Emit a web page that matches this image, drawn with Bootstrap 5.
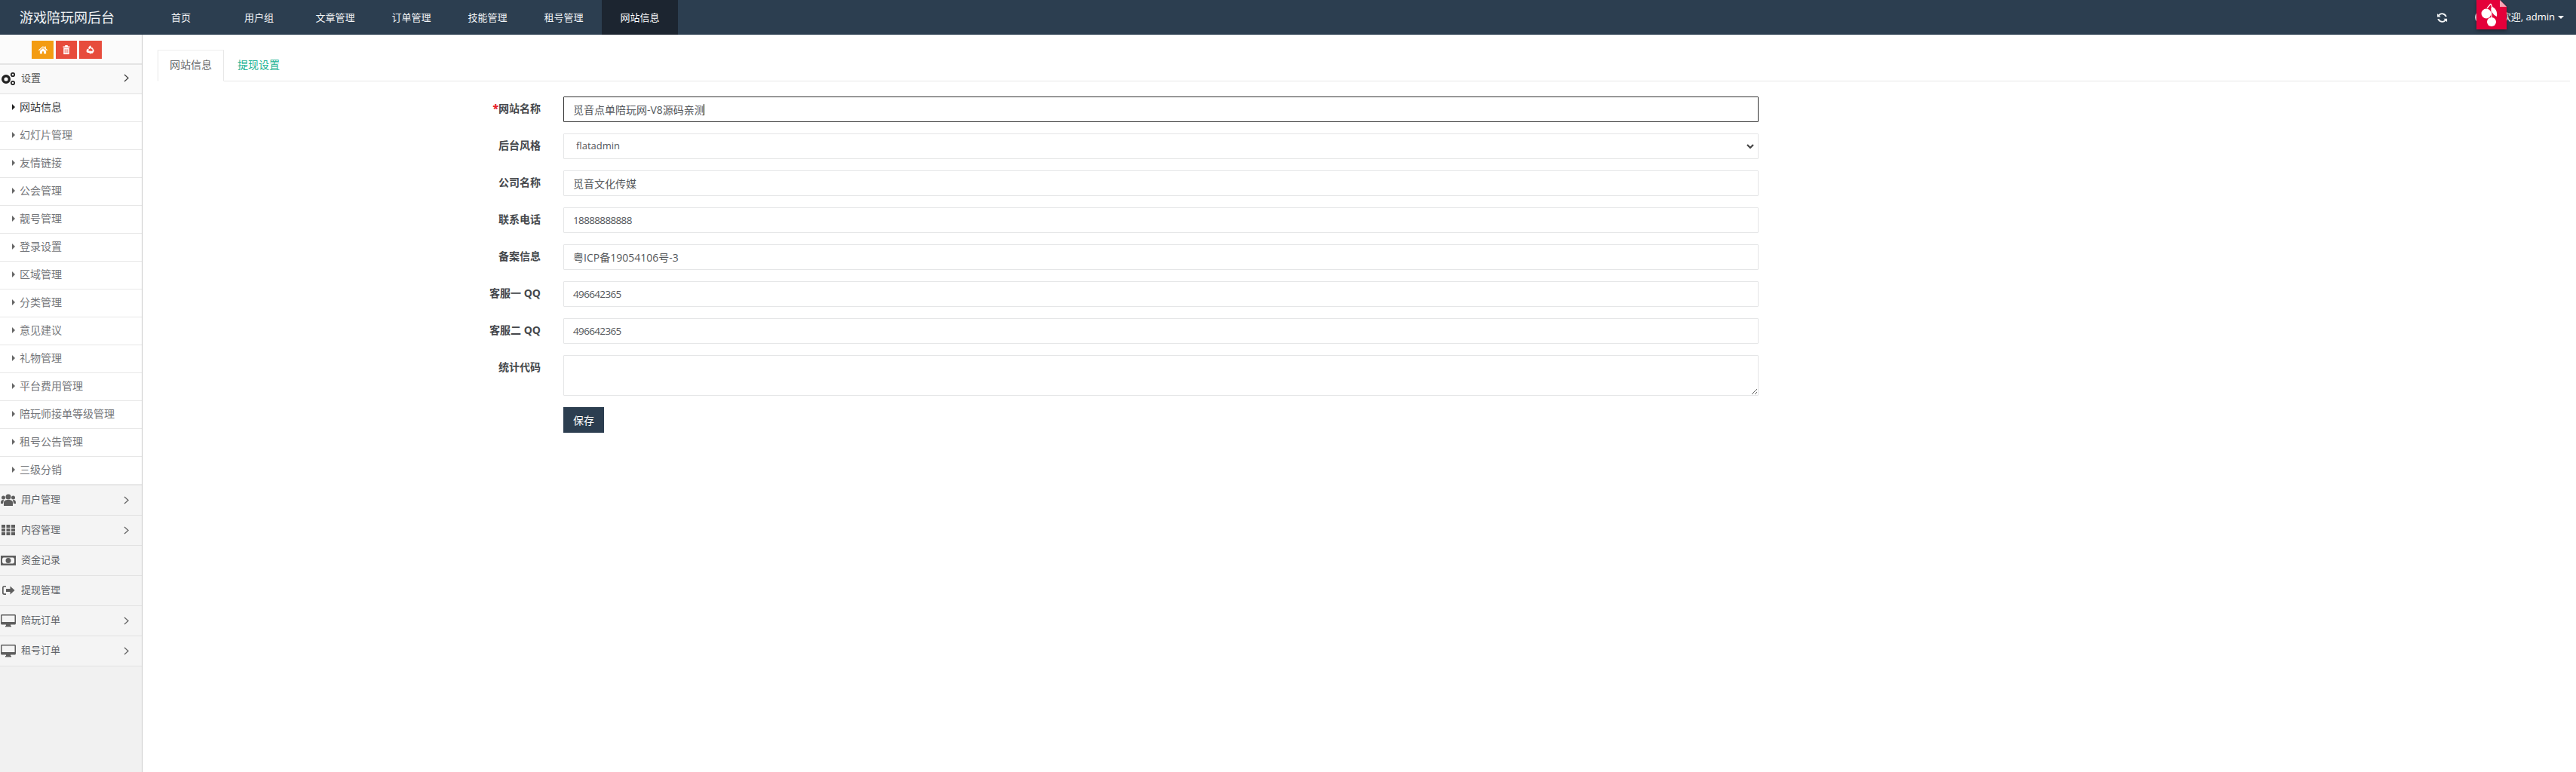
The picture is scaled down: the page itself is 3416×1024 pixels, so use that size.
<!DOCTYPE html>
<html lang="zh-CN">
<head>
    <meta charset="UTF-8">
    <meta name="viewport" content="width=device-width, initial-scale=1.0">
    <title>游戏陪玩网后台</title>
    <link href="https://cdn.jsdelivr.net/npm/bootstrap@5.3.0/dist/css/bootstrap.min.css" rel="stylesheet">
    <style>
        html, body { height: 100%; overflow: hidden; }
        body {
            font-family: "Open Sans", "Noto Sans CJK SC", sans-serif;
            font-size: 14px;
            color: #676a6c;
            background: #fff;
        }
        .top-bar { height: 46px; background: #2c3e50; padding: 0; flex-wrap: nowrap; }
        .top-brand { width: 187px; padding-left: 26px; color: #f0f3f5; font-size: 18px; line-height: 46px; flex: none; }
        .top-bar .nav-link {
            width: 101px; height: 46px; padding: 0; line-height: 46px; text-align: center;
            color: #f2f4f6; font-size: 13px;
        }
        .top-bar .nav-item:first-child .nav-link { width: 106px; }
        .top-bar .nav-link.active { background: #1c2530; color: #fff; }
        .top-right { margin-left: auto; color: #fff; font-size: 13px; padding-right: 16px; height: 46px; }
        .refresh-ico { width: 15px; height: 15px; fill: #f4f6f7; margin-right: 71px; }
        .circle-peek { position: absolute; left: 3282px; top: 15px; width: 16px; height: 16px; border-radius: 50%; background: #dfe3e7; }
        .logo-flag { position: absolute; left: 3284px; top: 0; width: 40px; height: 39px; filter: drop-shadow(0 2px 2px rgba(0,0,0,.35)); }
        .caret-down { display: inline-block; margin-left: 4px; border-left: 4px solid transparent; border-right: 4px solid transparent; border-top: 4px solid #fff; vertical-align: 2px; }

        .page-body { height: calc(100vh - 46px); }
        .side-col { width: 189px; flex: none; background: #f1f1f1; border-right: 1px solid #c8c8c8; }
        .quick-row { height: 40px; padding: 8px 0 0 42px; gap: 3px; background: #fbfbfb; border-bottom: 2px solid #e4e4e4; }
        .quick-btn { height: 24px; display: flex; align-items: center; justify-content: center; }
        .quick-btn svg { width: 12px; height: 12px; fill: #fff; }
        .q-orange { width: 29px; background: #f39c12; }
        .q-red { width: 28px; background: #e74c3c; }
        .q-red2 { width: 30px; background: #e74c3c; }
        .menu-head {
            height: 40px; display: flex; align-items: center; font-size: 13px; color: #62656a;
            border-bottom: 1px solid #e2e2e2; background: #f4f4f4; padding-bottom: 1px;
        }
        .menu-head .mi { width: 20px; height: 18px; margin: 0 7px 0 1px; fill: #5e5e5e; flex: none; }
        .menu-head .chev { width: 7px; height: 11px; margin-left: auto; margin-right: 17px; fill: none; stroke: #666; stroke-width: 1.3; }
        .menu-head.open { height: 39px; background: #f9f9f9; color: #555; padding-bottom: 3px; }
        .menu-head.open .chev { stroke: #444; }
        .gear-ring { fill: none; stroke: #222; }
        .sub-wrap { background: #fff; border-bottom: 2px solid #e7e7e7; }
        .sub-item {
            height: 37px; display: flex; align-items: center; color: #74767a; font-size: 14px;
            border-bottom: 1px solid #e7e7e7; padding-left: 16px; padding-bottom: 3px;
        }
        .sub-item:last-child { border-bottom: 0; height: 36px; }
        .sub-item::before {
            content: ""; width: 0; height: 0; margin-right: 6px;
            border-top: 4px solid transparent; border-bottom: 4px solid transparent; border-left: 4px solid #666;
        }
        .sub-item.on { color: #3a3c40; }
        .sub-item.on::before { border-left-color: #222; }

        .main-col { padding: 20px 8px 0 20px; background: #fff; min-width: 0; }
        .tab-bar.nav-tabs { border-bottom: 1px solid #e7e7e7; height: 42px; }
        .tab-bar .nav-link {
            height: 42px; padding: 0 15px; line-height: 38px; border-radius: 0; color: #1ab394; font-size: 14px;
            border-color: transparent; margin-bottom: -1px; margin-right: 2px;
        }
        .tab-bar .nav-link.active { color: #676a6c; border-color: #eee #e7e7e7 #fff; }
        .form-wrap { padding-top: 20px; }
        .field-row { display: flex; margin-bottom: 15px; }
        .field-label {
            width: 508px; padding-top: 5px; margin: 0; text-align: right; font-weight: 700; color: #44474b; font-size: 14px;
            flex: none;
        }
        .field-label b { color: #e8242c; }
        .field-box { width: 1585px; margin-left: 30px; position: relative; flex: none; }
        .field-box .form-control, .field-box .form-select {
            height: 34px; border: 1px solid #e5e6e7; border-radius: 1px; padding: 0 12px; font-size: 14px; color: #55585c;
            font-family: inherit; box-shadow: none;
        }
        .field-box .form-select {
            padding-left: 16px; font-size: 13px;
            background-image: url("data:image/svg+xml,%3csvg xmlns='http://www.w3.org/2000/svg' viewBox='0 0 10 7'%3e%3cpath fill='none' stroke='%23444' stroke-width='2.2' d='M1 1l4 4 4-4'/%3e%3c/svg%3e");
            background-size: 10px 7px; background-position: right 5px center;
        }
        .field-box textarea.form-control { height: 54px; padding-top: 6px; }
        .field-box .form-control.focused { border-color: #333; }
        .field-box .form-control.num-val { font-size: 13.5px; letter-spacing: -.65px; }
        .fake-caret { position: absolute; left: 186px; top: 10px; width: 1px; height: 15px; background: #222; }
        .save-btn.btn {
            width: 54px; height: 34px; padding: 0; border-radius: 0; background: #2c3e50; border-color: #2c3e50; color: #fff; font-size: 14px;
        }
    </style>
</head>
<body>
    <nav class="navbar navbar-expand top-bar">
        <div class="top-brand">游戏陪玩网后台</div>
        <ul class="navbar-nav">
            <li class="nav-item"><a class="nav-link" href="#">首页</a></li>
            <li class="nav-item"><a class="nav-link" href="#">用户组</a></li>
            <li class="nav-item"><a class="nav-link" href="#">文章管理</a></li>
            <li class="nav-item"><a class="nav-link" href="#">订单管理</a></li>
            <li class="nav-item"><a class="nav-link" href="#">技能管理</a></li>
            <li class="nav-item"><a class="nav-link" href="#">租号管理</a></li>
            <li class="nav-item"><a class="nav-link active" href="#">网站信息</a></li>
        </ul>
        <div class="top-right d-flex align-items-center">
            <svg class="refresh-ico" viewBox="0 0 16 16"><path d="M14.6 6.4h-2.3a4.6 4.6 0 0 0-8-1.3l1.7 1.7H1V2l1.7 1.7a7 7 0 0 1 11.9 2.7zM1.4 9.6h2.3a4.6 4.6 0 0 0 8 1.3L10 9.2h5V14l-1.7-1.700A7 7 0 0 1 1.400 9.600z"/></svg>
            <span>欢迎, admin<i class="caret-down"></i></span>
        </div>
        <span class="circle-peek"></span>
        <svg class="logo-flag" viewBox="0 0 40 39">
            <path d="M0 0H31L40 9V39H0z" fill="#e4003a"/>
            <path d="M31 0L40 9H31z" fill="#f7a5b5"/>
            <circle cx="13" cy="18" r="6.500" fill="#fff"/>
            <circle cx="20" cy="29" r="6" fill="#fff"/>
            <path d="M20 9c5 1 8 6 7 13-5-2-8-7-7-13z" fill="#fff"/>
            <path d="M19 5L14 11M19 5l2 5M20 10l0 14" stroke="#fff" stroke-width="1.200" fill="none"/>
        </svg>
    </nav>

    <div class="d-flex page-body">
        <aside class="side-col">
            <div class="d-flex quick-row">
                <a class="quick-btn q-orange" href="#"><svg viewBox="0 0 16 16"><path d="M8 1.500L0 8.300l1 1.200L8 3.700l7 5.800 1-1.200-3-2.500V2h-2v2.500zM2.500 9.800V15h4v-4h3v4h4V9.800L8 5.200z"/></svg></a>
                <a class="quick-btn q-red" href="#"><svg viewBox="0 0 16 16"><path fill-rule="evenodd" d="M6 0h4l1 2h3v2H2V2h3zM3 5h10v11H3zm2 2v7h1V7zm2.500 0v7h1V7zM10 7v7h1V7z"/></svg></a>
                <a class="quick-btn q-red2" href="#"><svg viewBox="0 0 16 16"><path d="M8 .5l2.600 4.400-1.800 1L8 4.600 6.600 7 3.800 5.400 5.400 2.600C6 1.400 6.800.5 8 .5zM11.400 4l2.500 4.300c.7 1.200.5 2.300-.2 3.200L11 10l1-2-2.800-1.600zM1 9l1.700-3 2.700 1.600L4 10h2.500v3.200H3.600C1.200 13.200.3 11 1 9zM8 10.400h3.800c1.400 0 2.100-.5 2.400-1l-1.400 3.500c-.5 1-1.300 1.300-2.300 1.300H8V16l-3-3.200L8 9z"/></svg></a>
            </div>
            <div class="menu-head open">
                <svg class="mi" viewBox="0 0 20 18"><circle class="gear-ring" cx="7" cy="10" r="4.300" stroke-width="3.400"/><circle class="gear-ring" cx="16" cy="4" r="2.200" stroke-width="1.800"/><circle class="gear-ring" cx="16" cy="15" r="2.200" stroke-width="1.800"/></svg>
                <span>设置</span>
                <svg class="chev" viewBox="0 0 7 11"><path d="M1 1l5 4.500-5 4.500"/></svg>
            </div>
            <div class="sub-wrap">
                <div class="sub-item on">网站信息</div>
                <div class="sub-item">幻灯片管理</div>
                <div class="sub-item">友情链接</div>
                <div class="sub-item">公会管理</div>
                <div class="sub-item">靓号管理</div>
                <div class="sub-item">登录设置</div>
                <div class="sub-item">区域管理</div>
                <div class="sub-item">分类管理</div>
                <div class="sub-item">意见建议</div>
                <div class="sub-item">礼物管理</div>
                <div class="sub-item">平台费用管理</div>
                <div class="sub-item">陪玩师接单等级管理</div>
                <div class="sub-item">租号公告管理</div>
                <div class="sub-item">三级分销</div>
            </div>
            <div class="menu-head">
                <svg class="mi" viewBox="0 0 20 18"><circle cx="10" cy="5" r="3.500"/><circle cx="3.500" cy="6" r="2.500"/><circle cx="16.500" cy="6" r="2.500"/><path d="M4 17v-4c0-3 2-4 6-4s6 1 6 4v4zM0 13c0-3 1-4 4-4l-1 5H0zM20 13c0-3-1-4-4-4l1 5h3z"/></svg>
                <span>用户管理</span>
                <svg class="chev" viewBox="0 0 7 11"><path d="M1 1l5 4.500-5 4.500"/></svg>
            </div>
            <div class="menu-head">
                <svg class="mi" viewBox="0 0 20 18"><path d="M1 2h5v4H1zM7.500 2h5v4h-5zM14 2h5v4h-5zM1 7h5v4H1zM7.500 7h5v4h-5zM14 7h5v4h-5zM1 12h5v4H1zM7.500 12h5v4h-5zM14 12h5v4h-5z"/></svg>
                <span>内容管理</span>
                <svg class="chev" viewBox="0 0 7 11"><path d="M1 1l5 4.500-5 4.500"/></svg>
            </div>
            <div class="menu-head">
                <svg class="mi" viewBox="0 0 20 18"><path fill-rule="evenodd" d="M0 3h20v13H0zM3.500 5.500L2 7v5l1.500 1.500h13L18 12V7l-1.500-1.500zM10 6a3.500 3.500 0 1 1 0 7 3.500 3.500 0 0 1 0-7z"/></svg>
                <span>资金记录</span>
            </div>
            <div class="menu-head">
                <svg class="mi" viewBox="0 0 20 18"><path d="M7 3H4.500C3 3 2 4 2 5.500v7C2 14 3 15 4.500 15H7v-1.800H4.500c-.5 0-.8-.3-.8-.8v-7c0-.5.3-.8.8-.8H7zM12.500 3.500V7H7v4h5.500v3.500L18.500 9z"/></svg>
                <span>提现管理</span>
            </div>
            <div class="menu-head">
                <svg class="mi" viewBox="0 0 20 18"><path fill-rule="evenodd" d="M1.500 1h17c.8 0 1.500.7 1.500 1.500V13c0 .8-.7 1.500-1.500 1.500H13V16h1v1.500H6V16h1v-1.500H1.500C.7 14.500 0 13.800 0 13V2.500C0 1.700.7 1 1.500 1zM1.500 2.500V11h17V2.500z"/></svg>
                <span>陪玩订单</span>
                <svg class="chev" viewBox="0 0 7 11"><path d="M1 1l5 4.500-5 4.500"/></svg>
            </div>
            <div class="menu-head">
                <svg class="mi" viewBox="0 0 20 18"><path fill-rule="evenodd" d="M1.500 1h17c.8 0 1.500.7 1.500 1.500V13c0 .8-.7 1.500-1.500 1.500H13V16h1v1.500H6V16h1v-1.500H1.500C.7 14.500 0 13.800 0 13V2.500C0 1.700.7 1 1.500 1zM1.500 2.500V11h17V2.500z"/></svg>
                <span>租号订单</span>
                <svg class="chev" viewBox="0 0 7 11"><path d="M1 1l5 4.500-5 4.500"/></svg>
            </div>
        </aside>

        <main class="main-col flex-grow-1">
            <ul class="nav nav-tabs tab-bar">
                <li class="nav-item"><a class="nav-link active" href="#">网站信息</a></li>
                <li class="nav-item"><a class="nav-link" href="#">提现设置</a></li>
            </ul>
            <form class="form-wrap">
                <div class="field-row">
                    <label class="field-label"><b>*</b>网站名称</label>
                    <div class="field-box"><input class="form-control focused" value="觅音点单陪玩网-V8源码亲测"><span class="fake-caret"></span></div>
                </div>
                <div class="field-row">
                    <label class="field-label">后台风格</label>
                    <div class="field-box"><select class="form-select"><option>flatadmin</option></select></div>
                </div>
                <div class="field-row">
                    <label class="field-label">公司名称</label>
                    <div class="field-box"><input class="form-control" value="觅音文化传媒"></div>
                </div>
                <div class="field-row">
                    <label class="field-label">联系电话</label>
                    <div class="field-box"><input class="form-control num-val" value="18888888888"></div>
                </div>
                <div class="field-row">
                    <label class="field-label">备案信息</label>
                    <div class="field-box"><input class="form-control" value="粤ICP备19054106号-3"></div>
                </div>
                <div class="field-row">
                    <label class="field-label">客服一 QQ</label>
                    <div class="field-box"><input class="form-control num-val" value="496642365"></div>
                </div>
                <div class="field-row">
                    <label class="field-label">客服二 QQ</label>
                    <div class="field-box"><input class="form-control num-val" value="496642365"></div>
                </div>
                <div class="field-row">
                    <label class="field-label">统计代码</label>
                    <div class="field-box"><textarea class="form-control"></textarea></div>
                </div>
                <div class="field-row">
                    <span class="field-label"></span>
                    <div class="field-box"><button type="button" class="btn save-btn">保存</button></div>
                </div>
            </form>
        </main>
    </div>
    <script src="https://cdn.jsdelivr.net/npm/bootstrap@5.3.0/dist/js/bootstrap.bundle.min.js"></script>
</body>
</html>
